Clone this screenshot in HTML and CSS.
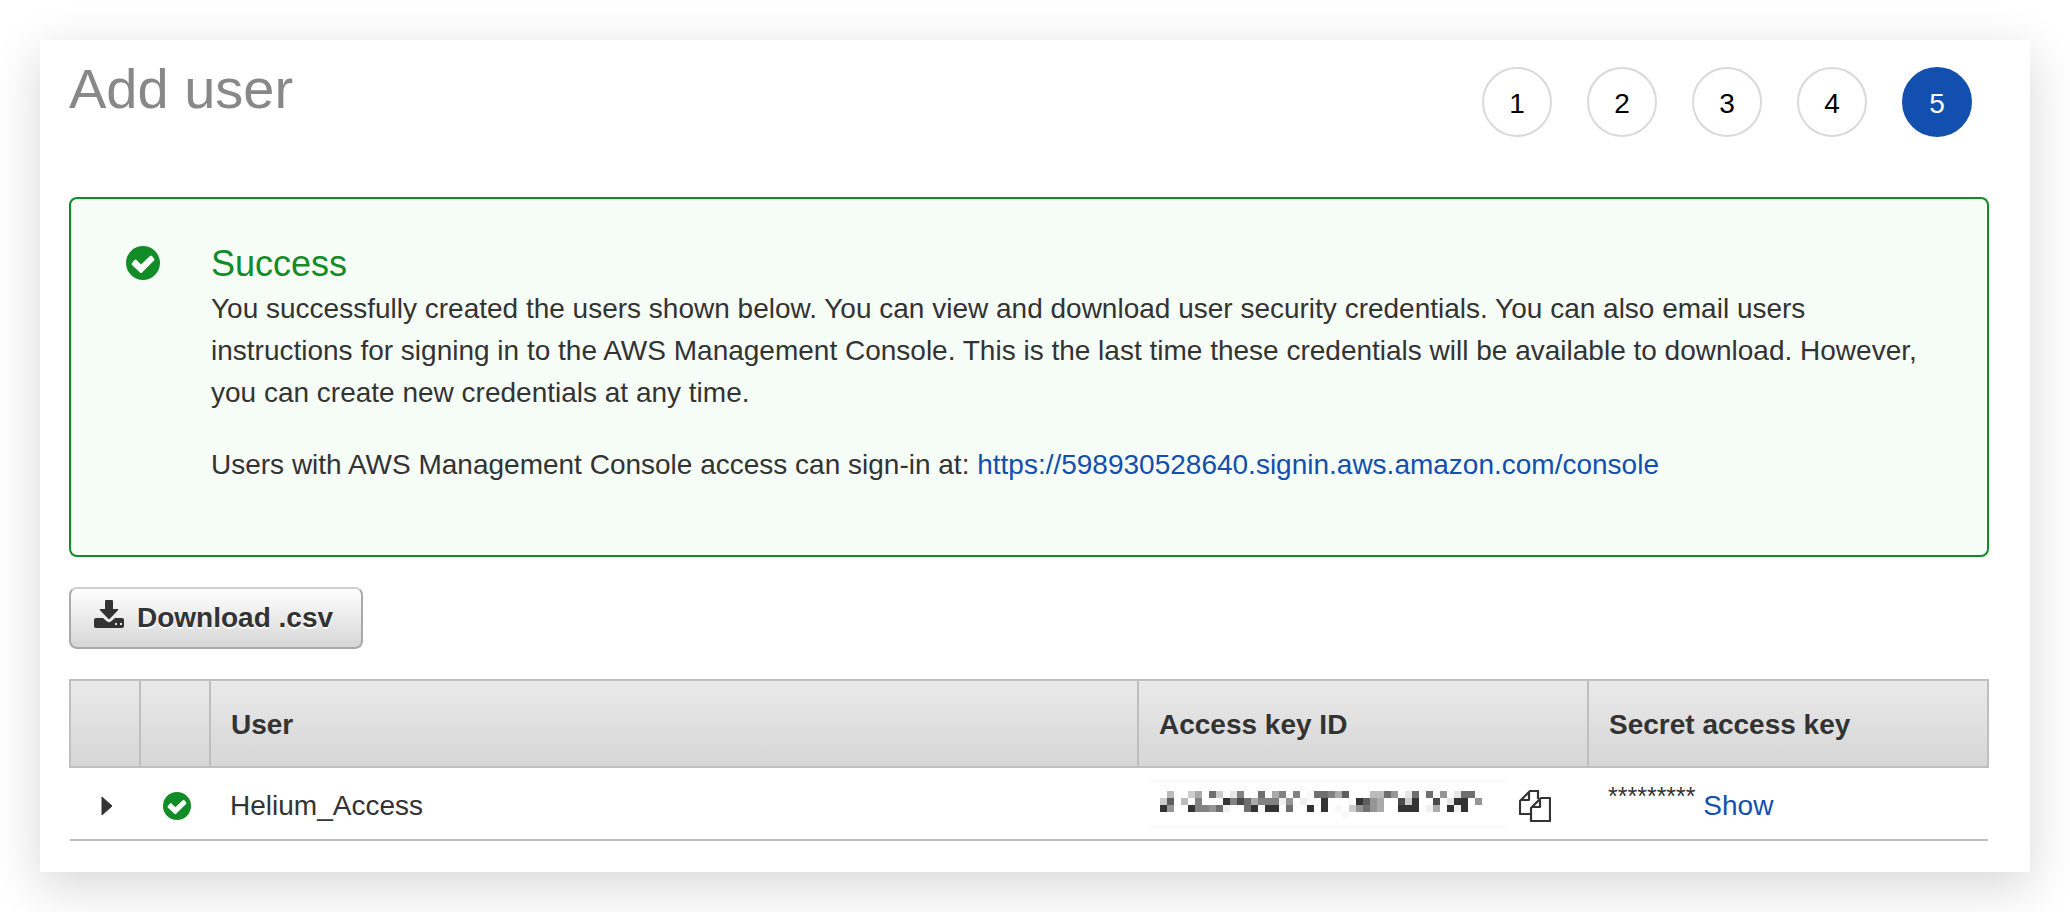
FILE: index.html
```html
<!DOCTYPE html>
<html lang="en">
<head>
	<meta charset="UTF-8">
	<title>Add user</title>
	<link rel="stylesheet" href="styles.css">
</head>
<body>
	<main class="panel">
		<header class="panel-header">
			<h1>Add user</h1>
			<ol class="steps">
				<li>1</li>
				<li>2</li>
				<li>3</li>
				<li>4</li>
				<li class="active" aria-current="step">5</li>
			</ol>
		</header>

		<section class="alert">
			<svg class="alert-icon" viewBox="0 0 34 34" aria-hidden="true">
				<circle cx="17" cy="17" r="17" fill="#128c26"/>
				<path d="M6 17l2.500-3q1-1 2 0l4.500 4.500 9-8.500q1-1 2 0l2 2.500q1 1 0 2L16 26.500q-1 1-2 0l-8-7.500q-1-1 0-2z" fill="#fff"/>
			</svg>
			<div class="alert-text">
				<h2>Success</h2>
				<p>You successfully created the users shown below. You can view and download user security credentials. You can also email users instructions for signing in to the AWS Management Console. This is the last time these credentials will be available to download. However, you can create new credentials at any time.</p>
				<p>Users with AWS Management Console access can sign-in at: <a href="https://598930528640.signin.aws.amazon.com/console">https://598930528640.signin.aws.amazon.com/console</a></p>
			</div>
		</section>

		<button type="button" class="download">
			<svg class="download-icon" viewBox="0 0 30 28" aria-hidden="true">
				<path d="M12 0h6q1 0 1 1v8h4.500q1.500 0 .5 1.200l-8 8.300q-1 1-2 0l-8-8.300Q5 9 6.500 9H11V1q0-1 1-1z"/>
				<path fill-rule="evenodd" d="M2 18h7l4 3.500q2 1.500 4 0L21 18h7q2 0 2 2v6q0 2-2 2H2q-2 0-2-2v-6q0-2 2-2zM21 23v2h2v-2zM26 23v2h2v-2z"/>
			</svg>
			Download .csv
		</button>

		<table class="users">
			<colgroup>
				<col class="col-icon">
				<col class="col-icon">
				<col>
				<col class="col-key">
				<col class="col-secret">
			</colgroup>
			<thead>
				<tr>
					<th></th>
					<th></th>
					<th>User</th>
					<th>Access key ID</th>
					<th>Secret access key</th>
				</tr>
			</thead>
			<tbody>
				<tr>
					<td class="icon-cell">
						<button type="button" class="icon-button" aria-label="Expand">
							<svg width="12" height="20" viewBox="0 0 12 20"><path d="M1 1l10 9-10 9z" fill="#333" stroke="#333" stroke-linejoin="round"/></svg>
						</button>
					</td>
					<td class="icon-cell">
						<svg class="row-icon" viewBox="0 0 34 34" aria-hidden="true">
							<circle cx="17" cy="17" r="17" fill="#128c26"/>
							<path d="M6 17l2.500-3q1-1 2 0l4.500 4.500 9-8.500q1-1 2 0l2 2.500q1 1 0 2L16 26.500q-1 1-2 0l-8-7.500q-1-1 0-2z" fill="#fff"/>
						</svg>
					</td>
					<td>Helium_Access</td>
					<td class="key-cell">
						<div class="key">
							<!-- masked key, one unit per block -->
							<span class="mask">
								<svg width="322" height="28" viewBox="0 0 46 4" shape-rendering="crispEdges" aria-hidden="true">
									<path fill="#333" d="M9 1h1v1h-1zM23 1h1v2h-1zM28 1h1v1h-1zM36 1h1v2h-1zM42 1h2v1h-2zM0 2h1v1h-1zM4 2h1v1h-1zM13 2h1v1h-1zM15 2h2v1h-2zM21 2h1v1h-1zM34 2h2v1h-2zM41 2h1v1h-1zM43 2h1v1h-1z"/>
									<path fill="#4a4a4a" d="M11 1h1v1h-1zM34 1h1v1h-1zM39 1h1v1h-1z"/>
									<path fill="#5e5e5e" d="M26 0h1v1h-1zM1 1h1v1h-1zM29 1h1v1h-1z"/>
									<path fill="#6f6f6f" d="M7 0h1v1h-1zM14 0h1v1h-1zM22 0h2v1h-2zM32 0h1v1h-1zM36 0h1v1h-1zM38 0h1v1h-1zM43 0h2v1h-2zM12 1h1v1h-1zM8 2h1v1h-1zM12 2h1v1h-1zM18 2h1v1h-1zM29 2h1v1h-1z"/>
									<path fill="#828282" d="M11 0h1v1h-1zM17 0h1v1h-1zM19 0h1v1h-1zM24 0h1v1h-1zM5 1h1v1h-1zM10 1h1v1h-1zM14 1h3v1h-3zM5 2h2v1h-2z"/>
									<path fill="#959595" d="M33 0h1v1h-1zM40 0h1v1h-1zM18 1h1v1h-1zM30 1h1v2h-1zM45 1h1v1h-1zM1 2h1v1h-1zM7 2h1v1h-1zM28 2h1v1h-1z"/>
									<path fill="#aaa" d="M5 0h1v1h-1zM25 0h1v1h-1zM13 1h1v1h-1zM31 1h1v2h-1zM16 0h1v1h-1zM39 2h1v1h-1z"/>
									<path fill="#bbb" d="M1 0h1v1h-1zM30 0h2v1h-2zM3 1h1v1h-1z"/>
									<path fill="#ccc" d="M4 0h1v1h-1zM8 0h1v1h-1zM0 1h1v1h-1zM35 1h1v1h-1zM27 2h1v1h-1z"/>
									<path fill="#e6e6e6" d="M10 0h1v1h-1zM35 0h1v1h-1zM42 0h1v1h-1zM41 1h1v1h-1z"/>
									<path fill="#f0f0f0" d="M17 1h1v1h-1zM20 1h1v1h-1zM9 2h1v1h-1zM38 2h1v1h-1zM42 2h1v1h-1z"/>
									<path fill="#f9f9f9" d="M21 0h1v2h-1zM14 2h1v1h-1zM25 2h1v1h-1zM26 3h1v1h-1z"/>
								</svg>
							</span>
							<button type="button" class="icon-button" aria-label="Copy">
								<svg width="32" height="32" viewBox="0 0 32 32" fill="none" stroke="#333" stroke-width="2.200" stroke-linejoin="round">
									<path d="M12 24H1V11L11 1h8v8M10 2v8H2"/>
									<path d="M12 18L22 8h9v23H12zM21 9v8h-8"/>
								</svg>
							</button>
						</div>
					</td>
					<td><span class="stars">*********</span> <a href="#">Show</a></td>
				</tr>
			</tbody>
		</table>
	</main>
</body>
</html>
```
FILE: styles.css
```css
* {
	box-sizing: border-box;
}

body {
	margin: 0;
	padding: 40px;
	background-color: #fff;
	color: #333;
	font-family: "Liberation Sans", Arial, sans-serif;
	font-size: 28px;
	line-height: 42px;
}

a {
	color: #124fae;
	text-decoration: none;
}

.panel {
	padding: 27px 41px 31px 29px;
	background-color: #fff;
	box-shadow: 0 14px 48px rgba(0, 0, 0, 0.16);
}

.panel-header {
	display: flex;
	justify-content: space-between;
	align-items: flex-start;
	margin-bottom: 60px;
	padding-right: 17px;
}

h1 {
	margin: 0;
	color: #888;
	font-size: 56px;
	font-weight: normal;
	line-height: 44px;
}

.steps {
	display: flex;
	gap: 35px;
	margin: 0;
	padding: 0;
	list-style: none;
}

.steps li {
	width: 70px;
	height: 70px;
	border: 2px solid #d9d9d9;
	border-radius: 50%;
	color: #000;
	line-height: 70px;
	text-align: center;
}

.steps .active {
	border-color: #124fae;
	background-color: #124fae;
	color: #fff;
}

.alert {
	display: flex;
	gap: 51px;
	margin-bottom: 30px;
	padding: 44px 50px 49px 55px;
	border: 2px solid #128c26;
	border-radius: 8px;
	background-color: #f6fdf6;
}

.alert-icon {
	flex: none;
	width: 34px;
	height: 34px;
	margin-top: 3px;
}

.alert h2 {
	margin: 0 0 3px;
	color: #128c26;
	font-size: 36px;
	font-weight: normal;
	line-height: 42px;
}

.alert p {
	margin: 0 0 30px;
}

.alert p:last-child {
	margin-bottom: 20px;
}

.download {
	display: flex;
	align-items: center;
	gap: 13px;
	height: 62px;
	margin-bottom: 30px;
	padding: 0 28px 0 23px;
	border: 2px solid #a9a9a9;
	border-top-color: #d0d0d0;
	border-radius: 8px;
	background: linear-gradient(#fff, #d6d6d6);
	color: #333;
	font-family: inherit;
	font-size: 28px;
	font-weight: bold;
	text-shadow: 0 2px 0 #fff;
	cursor: pointer;
}

.download-icon {
	width: 30px;
	height: 28px;
	margin-bottom: 8px;
	fill: #333;
}

.users {
	width: 100%;
	border-collapse: collapse;
	table-layout: fixed;
}

.col-icon {
	width: 70px;
}

.col-key {
	width: 450px;
}

.col-secret {
	width: 400px;
}

.users th {
	height: 87px;
	padding: 3px 20px 0;
	border: 2px solid #bfbfbf;
	text-align: left;
}

.users thead tr {
	background: linear-gradient(#eaeaea, #d6d6d6);
}

.users td {
	height: 73px;
	padding: 4px 20px 0;
	border-bottom: 2px solid #bfbfbf;
}

.users .icon-cell {
	padding: 4px 0 0 4px;
	line-height: 0;
	text-align: center;
}

.users .key-cell {
	padding: 4px 10px 0;
}

.row-icon {
	width: 28px;
	height: 28px;
}

.icon-button {
	padding: 0;
	border: none;
	background: none;
	line-height: 0;
	cursor: pointer;
}

.key {
	display: flex;
	align-items: center;
	gap: 11px;
}

.mask {
	width: 360px;
	height: 50px;
	margin-bottom: 4px;
	padding: 8px 12px;
	border: solid #fcfcfc;
	border-width: 4px 0;
	line-height: 0;
}

.stars {
	font-size: 25px;
	line-height: 0;
	vertical-align: super;
}
```
